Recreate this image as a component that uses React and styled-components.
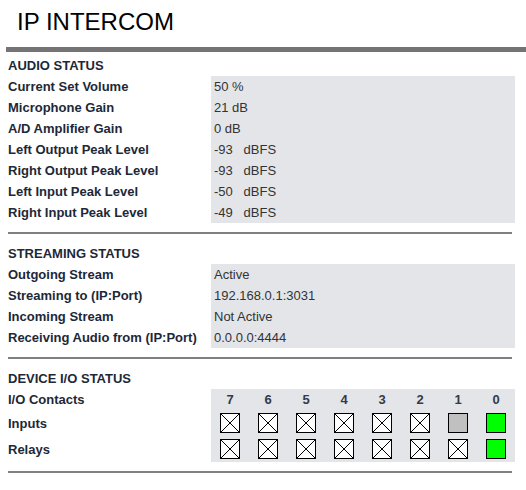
import styled, { createGlobalStyle } from 'styled-components';

const GlobalStyle = createGlobalStyle`
  body {
    margin: 0;
    background: #ffffff;
    font-family: "Liberation Sans", Arial, sans-serif;
  }
`;

const audioRows = [
  ['Current Set Volume', '50 %'],
  ['Microphone Gain', '21 dB'],
  ['A/D Amplifier Gain', '0 dB'],
  ['Left Output Peak Level', '-93   dBFS'],
  ['Right Output Peak Level', '-93   dBFS'],
  ['Left Input Peak Level', '-50   dBFS'],
  ['Right Input Peak Level', '-49   dBFS'],
];

const streamRows = [
  ['Outgoing Stream', 'Active'],
  ['Streaming to (IP:Port)', '192.168.0.1:3031'],
  ['Incoming Stream', 'Not Active'],
  ['Receiving Audio from (IP:Port)', '0.0.0.0:4444'],
];

const contacts = [7, 6, 5, 4, 3, 2, 1, 0];
// state per contact, in display order 7..0
const inputs = ['off', 'off', 'off', 'off', 'off', 'off', 'idle', 'on'];
const relays = ['off', 'off', 'off', 'off', 'off', 'off', 'off', 'on'];

function StatusBox({ state }) {
  return (
    <Box state={state}>
      {state === 'off' && (
        <svg width="18" height="18" viewBox="0 0 18 18">
          <line x1="0" y1="0" x2="18" y2="18" stroke="#000" strokeWidth="1" />
          <line x1="18" y1="0" x2="0" y2="18" stroke="#000" strokeWidth="1" />
        </svg>
      )}
    </Box>
  );
}

function StatusTable({ title, rows }) {
  return (
    <Table>
      <Heading>{title}</Heading>
      {rows.map(([label, value]) => (
        <Row key={label}>
          <Label>{label}</Label>
          <Value>{value}</Value>
        </Row>
      ))}
    </Table>
  );
}

export default function App() {
  return (
    <Page>
      <GlobalStyle />
      <Title>IP INTERCOM</Title>
      <TopBar />
      <Content>
        <StatusTable title="AUDIO STATUS" rows={audioRows} />
        <Divider />
        <StatusTable title="STREAMING STATUS" rows={streamRows} />
        <Divider />
        <Table>
          <Heading>DEVICE I/O STATUS</Heading>
          <Row>
            <Label>I/O Contacts</Label>
            <IoGrid>
              {contacts.map((n) => (
                <IoNumber key={n}>{n}</IoNumber>
              ))}
            </IoGrid>
          </Row>
          <Row tall>
            <Label>Inputs</Label>
            <IoGrid tall>
              {inputs.map((s, i) => (
                <IoCell key={i}>
                  <StatusBox state={s} />
                </IoCell>
              ))}
            </IoGrid>
          </Row>
          <Row tall>
            <Label>Relays</Label>
            <IoGrid tall>
              {relays.map((s, i) => (
                <IoCell key={i}>
                  <StatusBox state={s} />
                </IoCell>
              ))}
            </IoGrid>
          </Row>
        </Table>
        <Divider />
      </Content>
    </Page>
  );
}

const Page = styled.div`
  width: 526px;
  overflow: hidden;
`;

const Title = styled.h1`
  margin: 8px 0 0 17px;
  font-size: 24px;
  line-height: 27px;
  font-weight: normal;
  color: #000;
`;

const TopBar = styled.div`
  margin: 12px 0 0 6px;
  width: 520px;
  height: 5px;
  background: #747474;
`;

const Content = styled.div`
  padding: 3px 0 0 8px;
`;

const Table = styled.div`
  display: flex;
  flex-direction: column;
  width: 507px;
`;

const Heading = styled.div`
  height: 21px;
  line-height: 21px;
  font-size: 13px;
  font-weight: bold;
  color: #1d2838;
`;

const Row = styled.div`
  display: grid;
  grid-template-columns: 203px 304px;
  height: ${({ tall }) => (tall ? '26px' : '21px')};
`;

const Label = styled.div`
  display: flex;
  align-items: center;
  font-size: 13px;
  font-weight: bold;
  color: #1d2838;
  white-space: nowrap;
`;

const Value = styled.div`
  display: flex;
  align-items: center;
  padding-left: 3px;
  background: #e4e5e9;
  font-size: 13px;
  color: #333;
  white-space: pre;
`;

const IoGrid = styled.div`
  display: grid;
  grid-template-columns: repeat(8, 38px);
  background: #e4e5e9;
`;

const IoNumber = styled.div`
  display: flex;
  align-items: center;
  justify-content: center;
  font-size: 13px;
  font-weight: bold;
  color: #343a46;
`;

const IoCell = styled.div`
  display: flex;
  align-items: center;
  justify-content: center;
`;

const Box = styled.div`
  width: 20px;
  height: 20px;
  box-sizing: border-box;
  border: 1px solid #000;
  background: ${({ state }) =>
    state === 'on' ? '#00ff00' : state === 'idle' ? '#c0c0c0' : '#ffffff'};
  svg {
    display: block;
  }
`;

const Divider = styled.div`
  margin: 9px 0;
  width: 504px;
  height: 2px;
  background: #808080;
`;
